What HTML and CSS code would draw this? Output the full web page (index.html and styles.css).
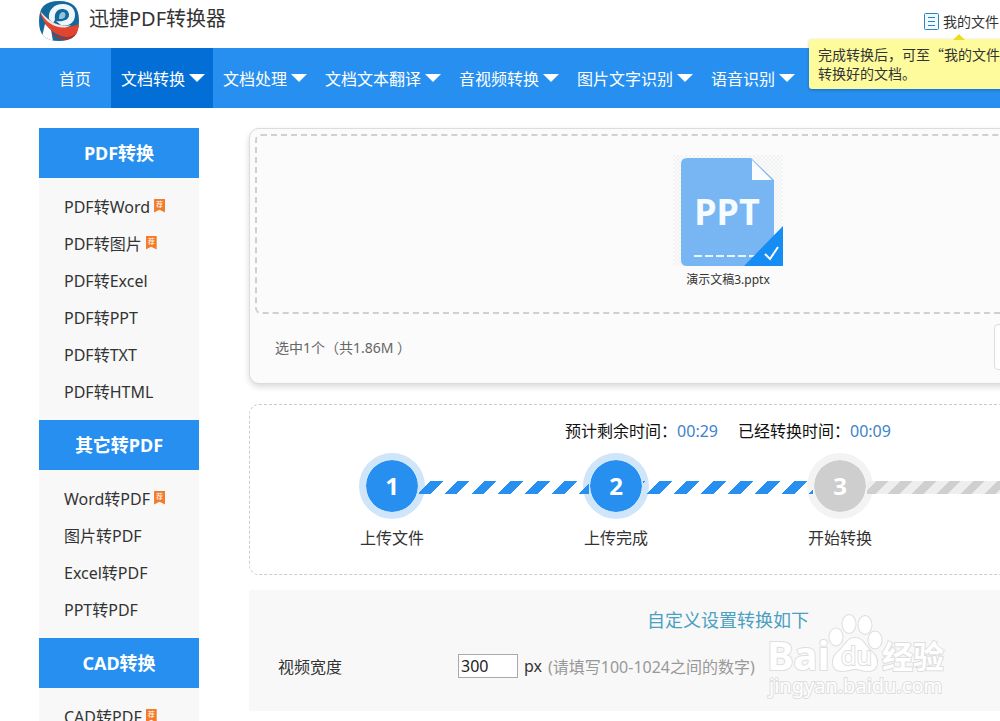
FILE: index.html
```html
<!DOCTYPE html>
<html lang="zh-CN">
  <head>
    <meta charset="utf-8" />
    <title>迅捷PDF转换器</title>
    <link rel="stylesheet" href="styles.css">
  </head>
  <body>
    <header class="header container">
      <a class="logo" href="/">
        <svg width="40" height="40" viewBox="0 0 40 40" aria-hidden="true">
          <defs>
            <clipPath id="logo-clip">
              <path d="M20 0C34 0 40 6 40 20S34 40 20 40S0 34 0 20S6 0 20 0Z" />
            </clipPath>
          </defs>
          <g clip-path="url(#logo-clip)">
            <rect width="40" height="40" fill="#15689c" />
            <path d="M2 40L6 23L12 29L14 40Z" fill="#fff" />
            <path d="M10 18C9 9 15 3 24 3C32 3 36 8 36 14C36 21 30 26 22 24L17 20C24 21 30 19 30 14C30 10 27 8 23 8C18 8 15 12 16 19L14 22Z" fill="#eef8fc" />
            <path d="M20 16C20 13 22 11 24 11C27 11 27 15 25 17C24 18 22 18 20 18Z" fill="#8fc4de" />
            <path d="M1 10C8 20 16 26 25 26C31 26 36 25 40 23V32C34 38 24 37 16 32C8 27 3 19 1 10Z" fill="#e2452f" />
            <path d="M1 10C7 17 14 23 22 24C25 25 29 25 32 24C27 28 18 27 12 23C7 20 3 15 1 10Z" fill="#f7e3e0" />
            <path d="M13 31C20 38 31 38 40 31V34C32 41 20 40 14 34Z" fill="#a8322c" />
          </g>
        </svg>
        <span>迅捷PDF转换器</span>
      </a>
      <div class="user-links">
        <a class="my-files" href="#files">
          <svg width="15" height="17" viewBox="0 0 15 17" fill="none" stroke="#2d83bb" aria-hidden="true">
            <rect x="0.5" y="0.5" width="14" height="16" rx="1" fill="#edf9ff" />
            <path d="M4 4.5H11M4 8.5H11M4 12.5H11" />
          </svg>
          <span>我的文件</span>
        </a>
        <div class="tooltip">完成转换后，可至“我的文件<br />转换好的文档。</div>
      </div>
    </header>

    <nav class="navbar">
      <div class="nav-tabs container">
        <a class="home" href="/">首页</a>
        <a class="active" href="#convert">文档转换<i class="arrow"></i></a>
        <a href="#process">文档处理<i class="arrow"></i></a>
        <a href="#translate">文档文本翻译<i class="arrow"></i></a>
        <a href="#media">音视频转换<i class="arrow"></i></a>
        <a href="#ocr">图片文字识别<i class="arrow"></i></a>
        <a href="#speech">语音识别<i class="arrow"></i></a>
      </div>
    </nav>

    <div class="page container">
      <aside class="sidebar">
        <h2>PDF转换</h2>
        <ul>
          <li><a href="#pdf-word">PDF转Word</a><span class="badge">荐</span></li>
          <li><a href="#pdf-image">PDF转图片</a><span class="badge">荐</span></li>
          <li><a href="#pdf-excel">PDF转Excel</a></li>
          <li><a href="#pdf-ppt">PDF转PPT</a></li>
          <li><a href="#pdf-txt">PDF转TXT</a></li>
          <li><a href="#pdf-html">PDF转HTML</a></li>
        </ul>
        <h2>其它转PDF</h2>
        <ul>
          <li><a href="#word-pdf">Word转PDF</a><span class="badge">荐</span></li>
          <li><a href="#image-pdf">图片转PDF</a></li>
          <li><a href="#excel-pdf">Excel转PDF</a></li>
          <li><a href="#ppt-pdf">PPT转PDF</a></li>
        </ul>
        <h2>CAD转换</h2>
        <ul>
          <li><a href="#cad-pdf">CAD转PDF</a><span class="badge">荐</span></li>
        </ul>
      </aside>

      <main class="content">
        <section class="upload">
          <div class="drop-area">
            <svg width="110" height="112" viewBox="0 0 110 112" aria-hidden="true">
              <defs>
                <pattern id="dots" width="4" height="4" patternUnits="userSpaceOnUse">
                  <path d="M0 0h2v2h-2zM2 2h2v2h-2z" fill="#f1f3f3" />
                </pattern>
              </defs>
              <rect width="110" height="111" fill="url(#dots)" />
              <path d="M14 3H78L101 25V111H14Q8 111 8 105V9Q8 3 14 3Z" fill="#78b6f3" />
              <path d="M79 5L99 25H79Z" fill="#fafcfd" />
              <text class="ppt-label" x="54" y="70" text-anchor="middle">PPT</text>
              <path d="M21 101H82" stroke="#e6f5ff" stroke-width="2" stroke-dasharray="8 3" />
              <path d="M110 71V111H71Z" fill="#168cf5" />
              <path d="M92 99L97 104L105 92" fill="none" stroke="#fff" stroke-width="2" />
            </svg>
            <span class="file-name">演示文稿3.pptx</span>
          </div>
          <div class="upload-bar">
            <span>选中1个（共1.86M ）</span>
            <button type="button" aria-label="继续添加"></button>
          </div>
        </section>

        <section class="progress">
          <div class="times">
            <span>预计剩余时间：<b>00:29</b></span>
            <span>已经转换时间：<b>00:09</b></span>
          </div>
          <ol class="steps">
            <li class="step"><span class="circle">1</span><span class="step-name">上传文件</span></li>
            <li class="line"></li>
            <li class="step"><span class="circle">2</span><span class="step-name">上传完成</span></li>
            <li class="line second"></li>
            <li class="step wait"><span class="circle">3</span><span class="step-name">开始转换</span></li>
            <li class="line wait"></li>
            <li class="step wait"><span class="circle">4</span><span class="step-name">转换完成</span></li>
          </ol>
        </section>

        <section class="settings">
          <h3>自定义设置转换如下</h3>
          <div class="field">
            <label for="video-width">视频宽度</label>
            <input type="text" id="video-width" value="300" />
            <span class="unit">px</span>
            <span class="hint">(请填写100-1024之间的数字)</span>
          </div>
          <svg class="watermark" width="184" height="90" viewBox="0 0 184 90" aria-hidden="true">
            <g fill="#fff" stroke="#dedede" stroke-width="2">
              <text x="0" y="58" font-size="40" font-weight="bold">Bai</text>
              <ellipse cx="69" cy="25" rx="6.5" ry="8.5" />
              <ellipse cx="82" cy="12" rx="6.5" ry="9" />
              <ellipse cx="98" cy="13" rx="6.5" ry="9" />
              <ellipse cx="108" cy="28" rx="6.5" ry="8.5" />
              <path d="M88 26C96 26 98 34 104 39C112 45 113 59 101 59C95 59 93 57 88 57C83 57 81 59 75 59C63 59 64 45 72 39C78 34 80 26 88 26Z" />
              <text x="74" y="53" font-size="25">du</text>
              <text x="115" y="56" font-size="31" font-weight="bold">经验</text>
              <text x="2" y="81" font-size="20">jingyan.baidu.com</text>
            </g>
          </svg>
        </section>
      </main>
    </div>
  </body>
</html>
```
FILE: styles.css
```css
:root {
  --blue: #268ff0;
  --dark-blue: #036fd6;
  --light-gray: #f8f8f8;
}

html {
  scrollbar-width: none;
}

body {
  margin: 0;
  overflow-x: hidden;
  font-family: "Noto Sans", "Noto Sans CJK SC", sans-serif;
  font-size: 16px;
  color: #333;
  background-color: #fff;
}

a {
  color: inherit;
  text-decoration: none;
}

h2,
h3,
ul,
ol {
  margin: 0;
  padding: 0;
}

ul,
ol {
  list-style: none;
}

.container {
  min-width: 1168px;
  max-width: 1200px;
  padding: 0 39px;
}

/* header */
.header {
  display: flex;
  justify-content: space-between;
  height: 48px;
}

.logo {
  display: flex;
  gap: 10px;
  padding-top: 1px;
  font-size: 20px;
  line-height: 36px;
}

.user-links {
  position: relative;
  width: 283px;
  font-size: 14px;
}

.my-files {
  display: flex;
  align-items: center;
  gap: 4px;
  height: 42px;
}

.tooltip {
  position: absolute;
  top: 39px;
  left: -115px;
  z-index: 1;
  width: 230px;
  padding: 6px 9px;
  border-radius: 3px;
  background-color: #fdfb9c;
  box-shadow: 0 1px 3px rgba(0, 0, 0, 0.25);
  font-family: "Noto Sans CJK SC", sans-serif;
  line-height: 19px;
}

.tooltip::before {
  content: "";
  position: absolute;
  top: -5px;
  left: 144px;
  border: 6px solid transparent;
  border-top: 0;
  border-bottom-color: #eedc20;
}

/* navigation */
.navbar {
  min-width: 1246px;
  background-color: var(--blue);
  color: #fff;
}

.nav-tabs {
  display: flex;
}

.nav-tabs a {
  display: flex;
  align-items: center;
  height: 60px;
  padding: 0 8px 0 10px;
  box-sizing: border-box;
}

.nav-tabs .home {
  padding: 0 20px;
}

.nav-tabs .active {
  background-color: var(--dark-blue);
}

.arrow {
  margin-left: 4px;
  border: 8px solid transparent;
  border-top-color: #fff;
  border-bottom: 0;
}

/* layout */
.page {
  display: flex;
  gap: 50px;
  padding-top: 20px;
}

.sidebar {
  flex: 0 0 160px;
  background-color: var(--light-gray);
}

.sidebar h2 {
  background-color: var(--blue);
  color: #fff;
  font-size: 18px;
  line-height: 50px;
  text-align: center;
}

.sidebar ul {
  padding: 9px 0 11px 25px;
}

.sidebar li {
  display: flex;
  align-items: center;
  gap: 4px;
  height: 37px;
}

.badge {
  width: 11px;
  height: 14px;
  background-color: #f47b2a;
  clip-path: polygon(0 0, 100% 0, 100% 100%, 50% 80%, 0 100%);
  color: #fff;
  font-size: 7px;
  line-height: 12px;
  text-align: center;
}

.content {
  flex: 1;
}

/* upload box */
.upload {
  padding: 5px;
  border: 1px solid #dcdcdc;
  border-radius: 10px;
  background-color: #fbfbfb;
  box-shadow: 0 3px 6px rgba(0, 0, 0, 0.15);
}

.drop-area {
  display: flex;
  flex-direction: column;
  align-items: center;
  gap: 2px;
  padding: 19px 0 21px;
  border: 2px dashed #d0d0d0;
  border-radius: 6px;
}

.ppt-label {
  font-size: 36px;
  font-weight: bold;
  fill: #f5fbff;
}

.file-name {
  font-size: 12px;
  line-height: 22px;
}

.upload-bar {
  display: flex;
  justify-content: space-between;
  align-items: center;
  padding: 10px 7px 8px 20px;
  color: #666;
  font-size: 14px;
}

.upload-bar button {
  width: 200px;
  height: 46px;
  border: 1px solid #ddd;
  border-radius: 4px;
  background-color: #fff;
}

/* progress */
.progress {
  margin-top: 20px;
  padding: 14px 109px 24px;
  border: 1px dashed #ccc;
  border-radius: 10px;
}

.times {
  display: flex;
  justify-content: center;
  gap: 20px;
  color: #111;
  line-height: 24px;
}

.times b {
  color: #3c83cc;
  font-weight: normal;
}

.steps {
  display: flex;
  margin-top: 10px;
}

.step {
  display: flex;
  flex-direction: column;
  align-items: center;
  gap: 7px;
  width: 66px;
  line-height: 24px;
}

.circle {
  width: 52px;
  height: 52px;
  border: 7px solid #cfe6fa;
  border-radius: 50%;
  background-color: var(--blue);
  background-clip: padding-box;
  color: #fff;
  font-size: 24px;
  font-weight: bold;
  line-height: 52px;
  text-align: center;
}

.step.wait .circle {
  border-color: #f3f3f3;
  background-color: #cecece;
}

.step-name {
  white-space: nowrap;
}

/* the stripes run over the pale rings up to the circles */
.line {
  z-index: 1;
  flex: 1;
  height: 13px;
  margin: 28px -6px 0;
  background: repeating-linear-gradient(135deg, transparent 0 8px, var(--blue) 8px 17px, transparent 17px 19px);
}

.line.second {
  background: repeating-linear-gradient(135deg, var(--blue) 0 2px, transparent 2px 12px, var(--blue) 12px 19px);
}

.line.wait {
  background: repeating-linear-gradient(135deg, #eee 0 7px, #cfcfcf 7px 15px, #eee 15px 17px);
}

/* settings */
.settings {
  position: relative;
  margin-top: 15px;
  padding: 16px 29px 33px;
  background-color: var(--light-gray);
}

.settings h3 {
  color: #4b9fc0;
  font-size: 18px;
  font-weight: normal;
  line-height: 28px;
  text-align: center;
}

.field {
  display: flex;
  align-items: center;
  margin-top: 20px;
}

.field label {
  width: 180px;
}

.field input {
  box-sizing: border-box;
  width: 60px;
  height: 24px;
  padding: 0 2px;
  border: 1px solid #aaa;
  color: #222;
  font: inherit;
}

.unit {
  margin: 0 6px;
}

.hint {
  color: #999;
}

.watermark {
  position: absolute;
  top: 22px;
  left: 518px;
  paint-order: stroke;
}
```
